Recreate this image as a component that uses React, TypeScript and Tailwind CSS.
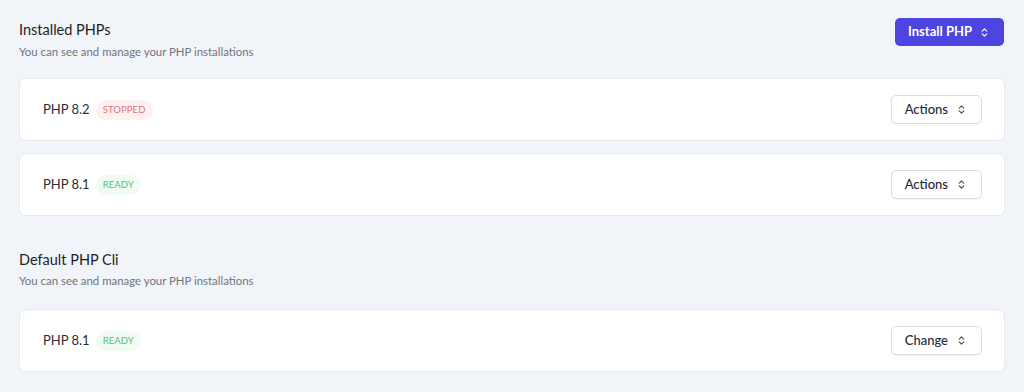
import React from "react";

const Chevrons = ({ className = "" }: { className?: string }) => (
  <svg viewBox="0 0 20 20" fill="none" stroke="currentColor" strokeWidth={1.7} strokeLinecap="round" strokeLinejoin="round" className={className}>
    <path d="M6.5 8l3.5-3.5 3.5 3.5" />
    <path d="M6.5 12l3.5 3.5 3.5-3.5" />
  </svg>
);

const Badge = ({ status }: { status: "STOPPED" | "READY" }) =>
  status === "STOPPED" ? (
    <span className="rounded-full bg-[#fdf1f1] px-[7px] py-[4px] text-[9.5px] leading-[12px] tracking-[0.01em] text-[#e0747a]">STOPPED</span>
  ) : (
    <span className="rounded-full bg-[#f0fbf2] px-[7px] py-[4px] text-[9.5px] leading-[12px] tracking-[0.01em] text-[#5cc279]">READY</span>
  );

const Row = ({ name, status, action }: { name: string; status: "STOPPED" | "READY"; action: string }) => (
  <div className="flex h-[63px] items-center justify-between rounded-[6px] border border-[#e6e9ee] bg-white pl-[23px] pr-[22px]">
    <div className="flex items-center gap-[6px]">
      <span className="text-[13px] text-[#2a2d34]">{name}</span>
      <Badge status={status} />
    </div>
    <button className="flex h-[29px] items-center gap-[7px] rounded-[5px] border border-[#d9dde3] bg-white px-[13px] text-[13px] font-medium text-[#252a3a] shadow-[0_1px_1px_rgba(0,0,0,0.03)]">
      {action}
      <Chevrons className="h-[13px] w-[13px] text-[#454a58]" />
    </button>
  </div>
);

export default function App() {
  return (
    <div className="h-[392px] w-[1024px] overflow-hidden bg-[#f1f4f8] px-[19px] pt-[18px]" style={{ fontFamily: "Lato, 'Noto Sans', sans-serif" }}>
      <div className="flex items-start justify-between">
        <div>
          <h2 className="mt-[2px] text-[14.5px] leading-[20px] text-[#1c1f26]">Installed PHPs</h2>
          <p className="mt-[4px] text-[11.4px] leading-[16px] text-[#70757f]">You can see and manage your PHP installations</p>
        </div>
        <button className="mr-[1px] flex h-[28px] items-center gap-[6px] rounded-[5px] bg-[#4c45e0] px-[13px] text-[13px] font-bold text-white">
          Install PHP
          <Chevrons className="h-[13px] w-[13px] text-white" />
        </button>
      </div>
      <div className="mt-[18px] flex flex-col gap-[12px]">
        <Row name="PHP 8.2" status="STOPPED" action="Actions" />
        <Row name="PHP 8.1" status="READY" action="Actions" />
      </div>
      <div className="mt-[34px]">
        <h2 className="text-[14.5px] leading-[20px] text-[#1c1f26]">Default PHP Cli</h2>
        <p className="mt-[3px] text-[11.4px] leading-[16px] text-[#70757f]">You can see and manage your PHP installations</p>
      </div>
      <div className="mt-[20px]">
        <Row name="PHP 8.1" status="READY" action="Change" />
      </div>
    </div>
  );
}
